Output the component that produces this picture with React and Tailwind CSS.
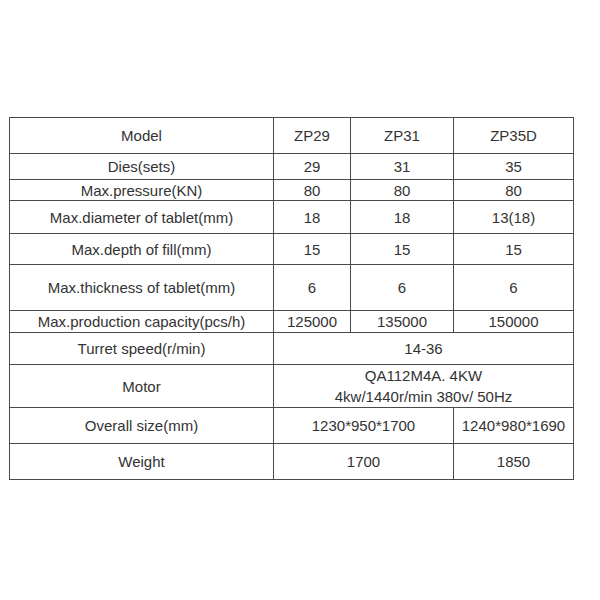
export default function App() {
  const cell = "border border-[#4a4a4a] text-center align-middle p-0";
  return (
    <div
      className="w-[600px] h-[600px] bg-white pt-[117px] pl-[9px]"
      style={{ fontFamily: '"Liberation Sans", Arial, sans-serif' }}
    >
      <table className="border-collapse table-fixed text-[15px] leading-[17px] text-[#333]">
        <colgroup>
          <col className="w-[264px]" />
          <col className="w-[77px]" />
          <col className="w-[103px]" />
          <col className="w-[120px]" />
        </colgroup>
        <tbody>
          <tr className="h-[36px]">
            <td className={cell}>Model</td>
            <td className={cell}>ZP29</td>
            <td className={cell}>ZP31</td>
            <td className={cell}>ZP35D</td>
          </tr>
          <tr className="h-[26px]">
            <td className={cell}>Dies(sets)</td>
            <td className={cell}>29</td>
            <td className={cell}>31</td>
            <td className={cell}>35</td>
          </tr>
          <tr className="h-[21px]">
            <td className={cell}>Max.pressure(KN)</td>
            <td className={cell}>80</td>
            <td className={cell}>80</td>
            <td className={cell}>80</td>
          </tr>
          <tr className="h-[33px]">
            <td className={cell}>Max.diameter of tablet(mm)</td>
            <td className={cell}>18</td>
            <td className={cell}>18</td>
            <td className={cell}>13(18)</td>
          </tr>
          <tr className="h-[31px]">
            <td className={cell}>Max.depth of fill(mm)</td>
            <td className={cell}>15</td>
            <td className={cell}>15</td>
            <td className={cell}>15</td>
          </tr>
          <tr className="h-[46px]">
            <td className={cell}>Max.thickness of tablet(mm)</td>
            <td className={cell}>6</td>
            <td className={cell}>6</td>
            <td className={cell}>6</td>
          </tr>
          <tr className="h-[22px]">
            <td className={cell}>Max.production capacity(pcs/h)</td>
            <td className={cell}>125000</td>
            <td className={cell}>135000</td>
            <td className={cell}>150000</td>
          </tr>
          <tr className="h-[32px]">
            <td className={cell}>Turret speed(r/min)</td>
            <td className={cell} colSpan={3}>14-36</td>
          </tr>
          <tr className="h-[43px]">
            <td className={cell}>Motor</td>
            <td className={`${cell} leading-[21px]`} colSpan={3}>
              QA112M4A. 4KW
              <br />
              4kw/1440r/min 380v/ 50Hz
            </td>
          </tr>
          <tr className="h-[36px]">
            <td className={cell}>Overall size(mm)</td>
            <td className={cell} colSpan={2}>1230*950*1700</td>
            <td className={cell}>1240*980*1690</td>
          </tr>
          <tr className="h-[36px]">
            <td className={cell}>Weight</td>
            <td className={cell} colSpan={2}>1700</td>
            <td className={cell}>1850</td>
          </tr>
        </tbody>
      </table>
    </div>
  );
}
